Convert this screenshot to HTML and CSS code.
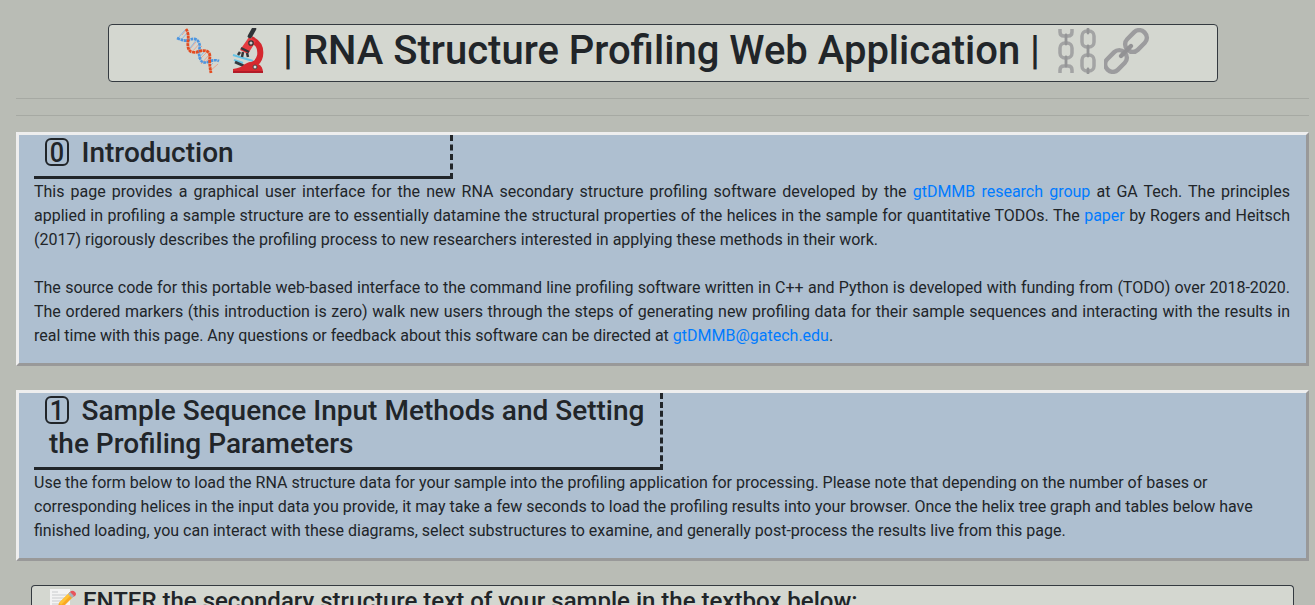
FILE: index.html
```html
<!DOCTYPE html>
<html lang="en">
<head>
<meta charset="utf-8">
<title>RNA Structure Profiling Web Application</title>
<link rel="stylesheet" href="styles.css">
</head>
<body>
<h1 class="title">
  <svg class="emoji dna" viewBox="0 0 44 46" fill="none">
    <g stroke="#e9a48e" stroke-width="1"><path d="M6 7l4-5M13 22l7-8M16 24l8-9M20 24l6-6M25 30l5-5M25 36l8-9M28 36l6-7M34 43l8-7"/></g>
    <g stroke="#8bb9e2" stroke-width="1"><path d="M2 10l7-8M5 12l7-8M10 12l3-3M14 20l7-9M22 31l6-7M30 35l5-4M34 38l3-3"/></g>
    <path d="M1 10q9 4 12 2q9-4 11 6q-2 8 0 12q1 6 8 4q7-3 11-1" stroke="#4c95e0" stroke-width="2.6" stroke-dasharray="2.8 .7"/>
    <path d="M10 1q3 4 2 12q-1 10 4 11q4 1 8-1q9-2 10 5q-1 8 1 17" stroke="#e44b20" stroke-width="2.8" stroke-dasharray="3 .6"/>
  </svg>
  <svg class="emoji scope" viewBox="0 0 34 46" fill="none">
    <path d="M1 27l20 6M2 32l9 3" stroke="#65c4e6" stroke-width="2"/>
    <path d="M3 34l9 4" stroke="#343a40" stroke-width="3"/>
    <path d="M19 11q11 5 9 17q-2 9-13 10" stroke="#d5282f" stroke-width="6"/>
    <path d="M1 45v-4q8-1 12-5l5-2 8 2q5 2 5 9z" fill="#d5282f"/>
    <path d="M1 44h30" stroke="#b31b28" stroke-width="2"/>
    <path d="M17 9l7 4-8 13-8-4z" fill="#e53a3f"/>
    <path d="M18 8l4-7" stroke="#303337" stroke-width="4.5" stroke-linecap="round"/>
    <path d="M9 20l8 4M8 24l-2 3M11 24l-1 5M15 25l1 4" stroke="#34363a" stroke-width="2.5"/>
    <circle cx="19" cy="15" r="2.2" fill="#ccc" stroke="#333" stroke-width="1.3"/>
    <circle cx="23" cy="39" r="2" fill="#ddd" stroke="#444"/>
  </svg>
  <span class="title-text">| RNA Structure Profiling Web Application |</span>
  <svg class="emoji chains" viewBox="0 0 38 46" fill="none" stroke="#a3a4a4" stroke-width="3.5">
    <path d="M2 1v3q0 4 4 4h4q4 0 4-4V1M2 45v-3q0-4 4-4h4q4 0 4 4v3"/>
    <rect x="2" y="15" width="12" height="15" rx="5"/>
    <rect x="24" y="3" width="12" height="16" rx="5"/><rect x="24" y="27" width="12" height="16" rx="5"/>
    <path d="M8 7v9M8 29v9M30 18v10M30 1v4M30 41v4" stroke="#949596" stroke-width="2.8" stroke-linecap="round"/>
  </svg>
  <svg class="emoji link" viewBox="0 0 46 46" fill="none" stroke="#9c9c9e" stroke-width="4.4">
    <rect x="-12" y="-7.5" width="24" height="15" rx="7" transform="translate(32 13) rotate(-45)"/>
    <rect x="-12" y="-7.5" width="24" height="15" rx="7" transform="translate(12 33) rotate(-45)"/>
    <path d="M17 28L27 18" stroke="#929294" stroke-linecap="round"/>
  </svg>
</h1>
<hr class="rule"><hr class="rule">
<section class="panel justified">
  <h3 class="heading third"><span class="keycap"><span class="digit">0</span></span>Introduction</h3>
  <p>This page provides a graphical user interface for the new RNA secondary structure profiling software developed by the <a href="#">gtDMMB research group</a> at GA Tech. The principles applied in profiling a sample structure are to essentially datamine the structural properties of the helices in the sample for quantitative TODOs. The <a href="#">paper</a> by Rogers and Heitsch (2017) rigorously describes the profiling process to new researchers interested in applying these methods in their work.</p>
  <p class="next">The source code for this portable web-based interface to the command line profiling software written in C++ and Python is developed with funding from (TODO) over 2018-2020. The ordered markers (this introduction is zero) walk new users through the steps of generating new profiling data for their sample sequences and interacting with the results in real time with this page. Any questions or feedback about this software can be directed at <a href="#">gtDMMB@gatech.edu</a>.</p>
</section>
<section class="panel">
  <h3 class="heading half"><span class="keycap"><span class="digit">1</span></span>Sample Sequence Input Methods and Setting the Profiling Parameters</h3>
  <p>Use the form below to load the RNA structure data for your sample into the profiling application for processing. Please note that depending on the number of bases or corresponding helices in the input data you provide, it may take a few seconds to load the profiling results into your browser. Once the helix tree graph and tables below have finished loading, you can interact with these diagrams, select substructures to examine, and generally post-process the results live from this page.</p>
</section>
<section class="entry">
  <h4 class="entry-heading">
    <svg class="memo" viewBox="0 0 28 28">
      <path d="M1 1h20v26H1z" fill="#f3f3f3"/>
      <path d="M3 4h6M3 7h15M3 10h15M3 13h12M3 16h10M3 19h10" stroke="#c9cbcd" stroke-width="1"/>
      <path d="M8 21l2-6L21 4l4 4-11 11z" fill="#f9a825"/>
      <path d="M10 15L21 4l2 2-11 11z" fill="#ffc336"/>
      <path d="M20 5l2-2q2-1 4 1t0 4l-2 1z" fill="#e8545b"/>
      <path d="M19 6l2-2 4 4-2 2z" fill="#a9b4b9"/>
    </svg>
    <span>ENTER the secondary structure text of your sample in the textbox below:</span>
  </h4>
</section>
</body>
</html>
```
FILE: styles.css
```css
* { box-sizing: border-box; }
html { overflow: hidden; }
body {
  margin: 0;
  height: 605px;
  overflow: hidden;
  padding: 24px 6px 0 16px;
  background: #b9bcb5;
  color: #212529;
  font: 400 16px/24px Roboto, sans-serif;
}
h1, h3, h4, p { margin: 0; font-weight: 500; }
p { font-weight: 400; }
a { color: #007bff; text-decoration: none; }
.title {
  display: flex;
  width: 1110px;
  height: 58px;
  margin: 0 0 16px 92px;
  padding: 1px 0 0 67px;
  border: 1px solid #343a40;
  border-radius: 4px;
  background: #d4d7d0;
  font-size: 40px;
  line-height: 50px;
  white-space: nowrap;
}
.emoji { display: block; flex: none; height: 46px; margin-top: 2px; }
.dna { width: 44px; }
.scope { width: 34px; margin-left: 12px; }
.title-text { width: 766px; margin-left: 17px; }
.chains { width: 38px; margin-left: 9px; }
.link { width: 46px; margin-left: 8px; }
.rule { height: 1px; margin: 0 0 16px; border: 0; background: #a6a9a3; }
.panel {
  width: 1293px;
  margin-bottom: 25px;
  padding: 0 16px 15px 15px;
  border: 3px solid;
  border-color: #eee #999 #999 #eee;
  background: #aebfd0;
}
.panel + .panel { margin-top: -1px; }
.justified { text-align: justify; }
.heading {
  margin-bottom: 1px;
  padding: 1px 0 7px 15px;
  border-right: 3px dashed #212529;
  border-bottom: 3px solid #212529;
  font-size: 28px;
  line-height: 33px;
  text-align: left;
  text-indent: -4px;
}
.panel + .panel { margin-bottom: 24px; }
.third { width: 419px; }
.half { width: 629px; }
.keycap {
  display: inline-block;
  width: 24px;
  height: 28px;
  margin-right: 12.5px;
  border: 2px solid #212529;
  border-radius: 6px;
  line-height: 25px;
  text-align: center;
  text-indent: 0;
}
.digit { display: inline-block; transform: scaleX(0.9); }
.next { margin-top: 24px; }
.entry {
  width: 1263px;
  height: 20px;
  margin-left: 15px;
  padding: 1px 17px;
  border: 1px solid #343a40;
  border-bottom: 0;
  border-radius: 4px 4px 0 0;
  background: #d4d7d0;
}
.entry-heading { display: flex; font-size: 24px; line-height: 28.8px; white-space: nowrap; }
.memo { flex: none; width: 28px; height: 28px; margin: 1px 6px 0 0; }
```
